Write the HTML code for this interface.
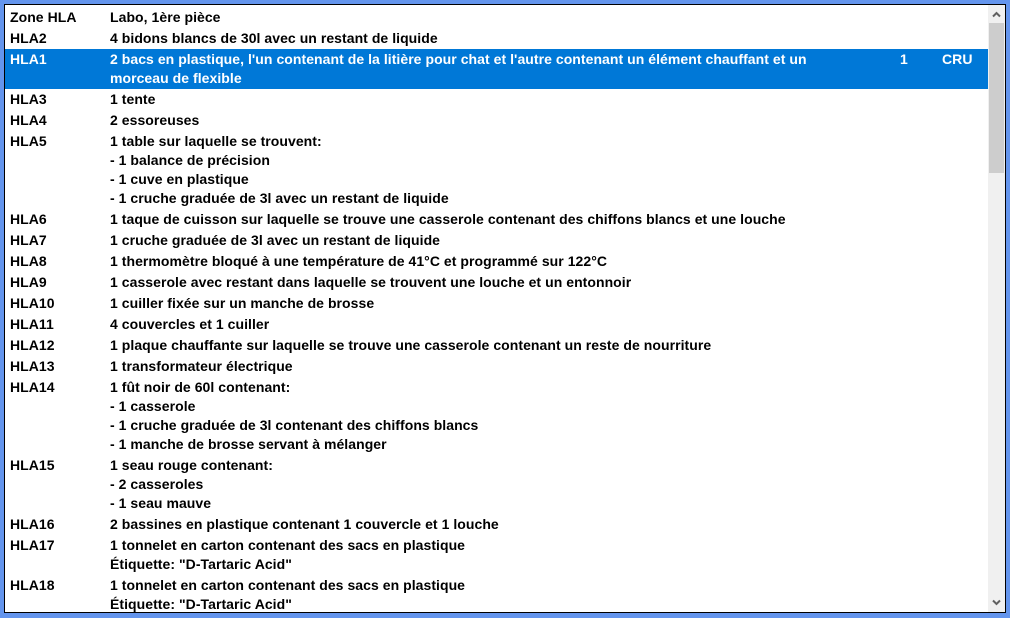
<!DOCTYPE html>
<html><head><meta charset="utf-8"><style>
html,body{margin:0;padding:0;}
body{width:1010px;height:618px;background:#6495ed;position:relative;overflow:hidden;font-family:"Liberation Sans",Tahoma,sans-serif;font-weight:bold;font-size:14px;letter-spacing:0.05px;color:#000;}
#box{position:absolute;left:4px;top:4px;width:1000px;height:607px;border:1px solid #000;background:#fff;overflow:hidden;}
#rows{position:absolute;left:0;top:2px;width:983px;}
.r{position:relative;padding:1px 0;line-height:19px;}
.r .a{position:absolute;left:5px;top:1px;}
.r .b{margin-left:105px;width:750px;}
.sel{background:#0078d7;color:#fff;}
.c{position:absolute;top:1px;}
#sb{position:absolute;left:983px;top:0;width:17px;height:607px;background:#f0f0f0;}
#th{position:absolute;left:1px;top:18px;width:15px;height:150px;background:#cdcdcd;}
.ar{position:absolute;left:4px;width:9px;height:9px;}
#rs{position:absolute;left:1006px;top:0;width:4px;height:618px;background:#6495ed;}
</style></head><body>
<div id="box">
<div id="rows">
<div class="r"><span class="a">Zone HLA</span><div class="b">Labo, 1ère pièce</div></div>
<div class="r"><span class="a">HLA2</span><div class="b">4 bidons blancs de 30l avec un restant de liquide</div></div>
<div class="r sel"><span class="a">HLA1</span><div class="b">2 bacs en plastique, l'un contenant de la litière pour chat et l'autre contenant un élément chauffant et un morceau de flexible</div><span class="c" style="left:895px">1</span><span class="c" style="left:937px">CRU</span></div>
<div class="r"><span class="a">HLA3</span><div class="b">1 tente</div></div>
<div class="r"><span class="a">HLA4</span><div class="b">2 essoreuses</div></div>
<div class="r"><span class="a">HLA5</span><div class="b">1 table sur laquelle se trouvent:<br>- 1 balance de précision<br>- 1 cuve en plastique<br>- 1 cruche graduée de 3l avec un restant de liquide</div></div>
<div class="r"><span class="a">HLA6</span><div class="b">1 taque de cuisson sur laquelle se trouve une casserole contenant des chiffons blancs et une louche</div></div>
<div class="r"><span class="a">HLA7</span><div class="b">1 cruche graduée de 3l avec un restant de liquide</div></div>
<div class="r"><span class="a">HLA8</span><div class="b">1 thermomètre bloqué à une température de 41°C et programmé sur 122°C</div></div>
<div class="r"><span class="a">HLA9</span><div class="b">1 casserole avec restant dans laquelle se trouvent une louche et un entonnoir</div></div>
<div class="r"><span class="a">HLA10</span><div class="b">1 cuiller fixée sur un manche de brosse</div></div>
<div class="r"><span class="a">HLA11</span><div class="b">4 couvercles et 1 cuiller</div></div>
<div class="r"><span class="a">HLA12</span><div class="b">1 plaque chauffante sur laquelle se trouve une casserole contenant un reste de nourriture</div></div>
<div class="r"><span class="a">HLA13</span><div class="b">1 transformateur électrique</div></div>
<div class="r"><span class="a">HLA14</span><div class="b">1 fût noir de 60l contenant:<br>- 1 casserole<br>- 1 cruche graduée de 3l contenant des chiffons blancs<br>- 1 manche de brosse servant à mélanger</div></div>
<div class="r"><span class="a">HLA15</span><div class="b">1 seau rouge contenant:<br>- 2 casseroles<br>- 1 seau mauve</div></div>
<div class="r"><span class="a">HLA16</span><div class="b">2 bassines en plastique contenant 1 couvercle et 1 louche</div></div>
<div class="r"><span class="a">HLA17</span><div class="b">1 tonnelet en carton contenant des sacs en plastique<br>Étiquette: "D-Tartaric Acid"</div></div>
<div class="r"><span class="a">HLA18</span><div class="b">1 tonnelet en carton contenant des sacs en plastique<br>Étiquette: "D-Tartaric Acid"</div></div>
</div>
<div id="sb">
<svg class="ar" style="top:5px" viewBox="0 0 9 9"><path d="M1 6.5L4.5 3L8 6.5" fill="none" stroke="#606060" stroke-width="2"/></svg>
<div id="th"></div>
<svg class="ar" style="top:593px" viewBox="0 0 9 9"><path d="M1 2.5L4.5 6L8 2.5" fill="none" stroke="#606060" stroke-width="2"/></svg>
</div>
</div>
<div id="rs"></div>
</body></html>
